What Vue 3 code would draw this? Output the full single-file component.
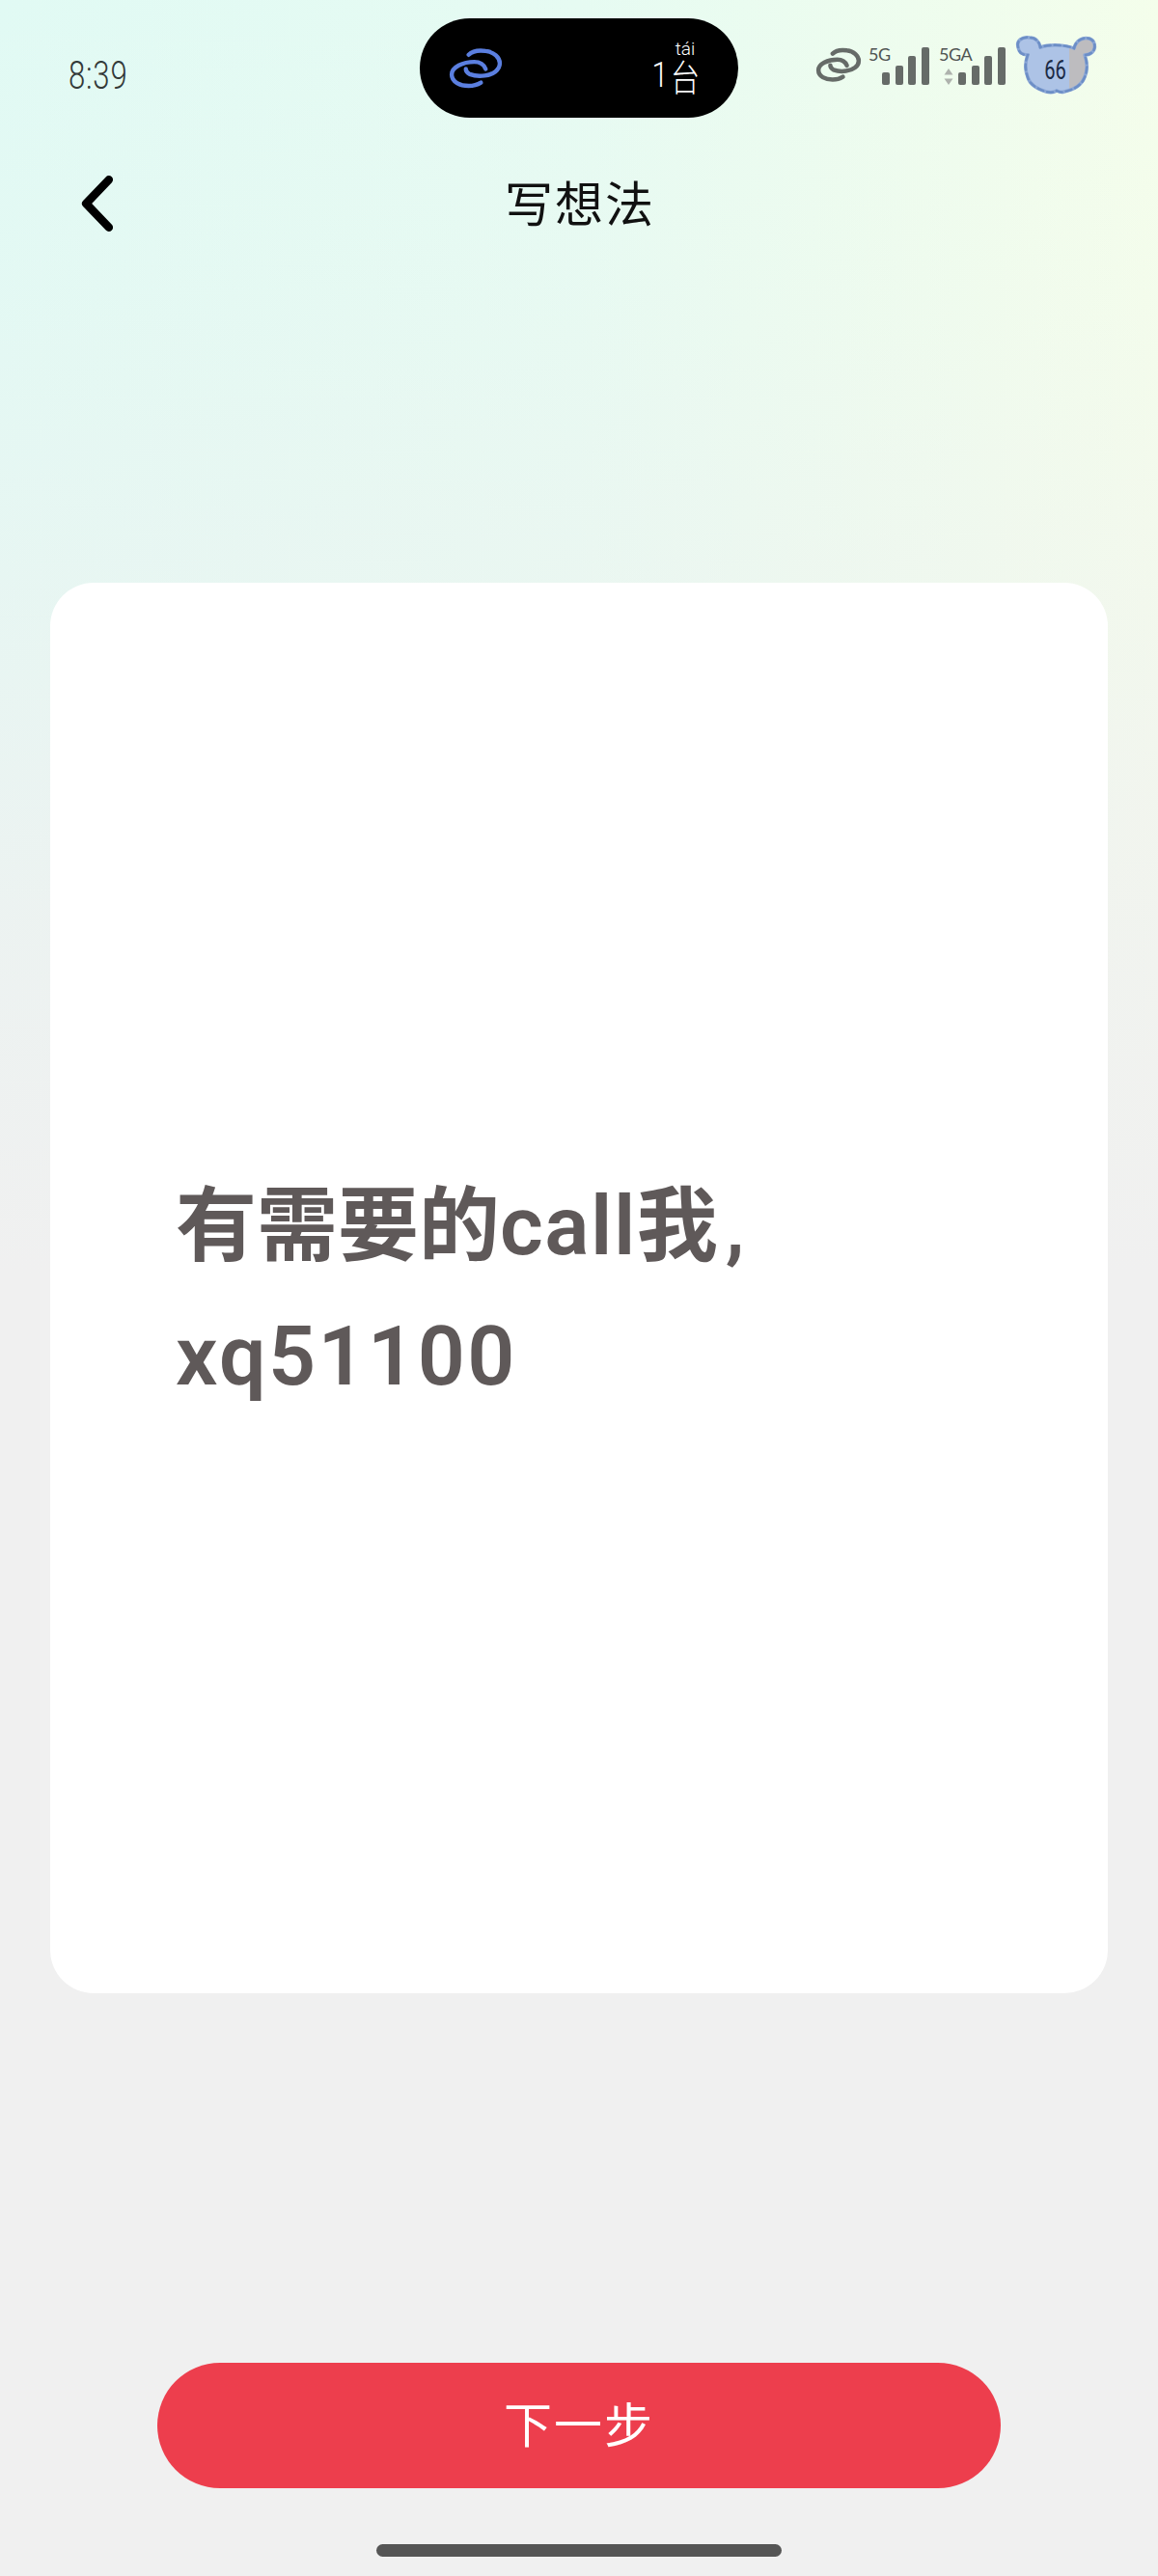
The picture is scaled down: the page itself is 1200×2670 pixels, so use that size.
<script setup>
const bars = [
  { x: 0, h: 13 },
  { x: 14, h: 20 },
  { x: 27, h: 30 },
  { x: 41, h: 39 }
]
const koalaPath =
  'M10 19 C8 12 14 8 22 9 C28 9 32 13 33 19 C42 16 58 16 68 20 C70 12 77 8 84 10 C90 12 91 20 87 24 C85 26 81 27 79 27 C82 35 82 43 79 50 C76 58 68 63 58 65 C55 66 52 65 50 64 C47 66 43 66 39 65 C29 62 22 57 20 50 C17 42 17 35 20 27 C14 27 11 25 10 19 Z'
</script>

<template>
  <div class="page">
    <header class="status">
      <div class="status-left"><span class="time">8:39</span></div>
      <div class="island">
        <svg class="island-link" viewBox="9 8 57 44" fill="none" stroke="#5b7fe0" stroke-width="4.500" stroke-linecap="round">
          <path d="M30 16 C34 12 41 11 48 12 C57 13 63 19 63 25 C63 32 56 37 47 38 C41 39 35 38 31 36.500 C28.500 35 27 33 27 31" />
          <path d="M48 31 C46 26 42 23.500 36 23.500 C24 23.500 12 29 12 37 C12 45 21 49 30 49 C35 49 39 48 43 45.500" />
        </svg>
        <div class="island-count">
          <span class="count-num">1</span>
          <div class="count-unit">
            <span class="pinyin">tái</span>
            <span class="hanzi">台</span>
          </div>
        </div>
      </div>
      <div class="status-right">
        <svg class="link-grey" viewBox="9 8 57 44" fill="none" stroke="#666b68" stroke-width="5.500" stroke-linecap="round">
          <path d="M30 16 C34 12 41 11 48 12 C57 13 63 19 63 25 C63 32 56 37 47 38 C41 39 35 38 31 36.500 C28.500 35 27 33 27 31" />
          <path d="M48 31 C46 26 42 23.500 36 23.500 C24 23.500 12 29 12 37 C12 45 21 49 30 49 C35 49 39 48 43 45.500" />
        </svg>
        <div class="net net-5g">
          <span class="net-label">5G</span>
          <svg class="signal" viewBox="0 0 49 39" fill="#666b68">
            <rect v-for="b in bars" :key="b.x" :x="b.x" :y="39 - b.h" width="8" :height="b.h" rx="2" />
          </svg>
        </div>
        <div class="net net-5ga">
          <span class="net-label">5GA</span>
          <svg class="arrows" viewBox="0 0 10 17" fill="#aeb2ad">
            <path d="M5 0 L9.500 6.500 H0.500 Z" />
            <path d="M5 17 L9.500 10.500 H0.500 Z" />
          </svg>
          <svg class="signal" viewBox="0 0 49 39" fill="#666b68">
            <rect v-for="b in bars" :key="b.x" :x="b.x" :y="39 - b.h" width="8" :height="b.h" rx="2" />
          </svg>
        </div>
        <div class="koala">
          <svg viewBox="0 0 100 75">
            <defs>
              <clipPath id="koala-level"><rect x="0" y="0" width="63" height="75" /></clipPath>
              <clipPath id="koala-rest"><rect x="63" y="0" width="37" height="75" /></clipPath>
            </defs>
            <path fill="#bdbcbf" clip-path="url(#koala-rest)" :d="koalaPath" />
            <path fill="#adc3e6" clip-path="url(#koala-level)" :d="koalaPath" />
            <path fill="none" stroke="#8ba7d6" stroke-width="3.500" stroke-linejoin="round" :d="koalaPath" />
            <path fill="none" stroke="#6c8ec6" stroke-width="2.500" stroke-linecap="round" stroke-dasharray="6 4" :d="koalaPath" />
          </svg>
          <span class="koala-num">66</span>
        </div>
      </div>
    </header>

    <nav class="nav">
      <button class="back" type="button" aria-label="返回">
        <svg viewBox="0 0 32 56" fill="none" stroke="#000" stroke-width="8" stroke-linecap="round" stroke-linejoin="round">
          <path d="M27 5 L5 28 L27 51" />
        </svg>
      </button>
      <h1 class="title">写想法</h1>
    </nav>

    <main class="card">
      <div class="idea">
        <p class="idea-line">有需要的<span class="latin">call</span>我<span class="comma">,</span></p>
        <p class="idea-line handle-line"><span class="latin handle">xq51100</span></p>
      </div>
    </main>

    <footer class="footer">
      <button class="next" type="button">下一步</button>
      <div class="home-bar"></div>
    </footer>
  </div>
</template>

<style scoped>
.page {
  height: 2670px;
  display: flex;
  flex-direction: column;
  overflow: hidden;
  background:
    linear-gradient(to bottom, rgba(240, 240, 240, 0) 0, rgba(240, 240, 240, 0.14) 300px, rgba(240, 240, 240, 0.42) 620px, rgba(240, 240, 240, 0.75) 950px, #f0f0f0 1320px),
    linear-gradient(to right, #e1faf4 0%, #e6fbf2 50%, #f4feeb 100%);
  font-family: "Noto Sans CJK SC", "Noto Sans", sans-serif;
}
.status {
  flex: none;
  display: grid;
  grid-template-columns: 1fr 330px 1fr;
  height: 103px;
  margin-top: 19px;
}
.status-left {
  padding: 39px 0 0 71px;
}
.time {
  display: inline-block;
  font-family: "Roboto", sans-serif;
  font-size: 41px;
  line-height: 41px;
  font-weight: 300;
  letter-spacing: 1px;
  color: #333938;
  transform: scaleX(0.76);
  transform-origin: left center;
}
.island {
  display: flex;
  align-items: center;
  justify-content: space-between;
  padding: 0 41px 0 30px;
  background: #000;
  border-radius: 52px;
}
.island-link {
  width: 56px;
  height: 43px;
  margin-top: -1px;
}
.island-count {
  display: flex;
  align-items: flex-end;
  gap: 2px;
  color: #fff;
  margin-top: -3px;
}
.count-num {
  font-family: "Roboto", sans-serif;
  font-size: 36px;
  line-height: 38px;
  font-weight: 300;
  transform: scaleX(0.85);
}
.count-unit {
  display: flex;
  flex-direction: column;
  align-items: center;
  width: 28px;
}
.pinyin {
  font-family: "Roboto", sans-serif;
  font-size: 19px;
  line-height: 17px;
  font-weight: 300;
}
.hanzi {
  font-size: 38px;
  line-height: 38px;
  font-weight: 300;
  transform: scaleX(0.8);
}
.status-right {
  display: flex;
  align-items: flex-start;
  padding: 20px 0 0 80px;
}
.link-grey {
  flex: none;
  width: 48px;
  height: 36px;
  margin-top: 10px;
}
.net {
  flex: none;
  position: relative;
  height: 39px;
  margin-top: 10px;
}
.net-5g {
  width: 63px;
  margin-left: 7px;
}
.net-5ga {
  width: 69px;
  margin-left: 10px;
}
.net-label {
  position: absolute;
  left: 0;
  top: -2px;
  font-family: "Lato", "Liberation Sans", sans-serif;
  font-size: 18px;
  line-height: 18px;
  color: #4f5452;
  letter-spacing: -0.5px;
  white-space: nowrap;
}
.signal {
  position: absolute;
  right: 0;
  bottom: 0;
  width: 49px;
  height: 39px;
}
.arrows {
  position: absolute;
  left: 5px;
  bottom: 0;
  width: 10px;
  height: 17px;
}
.koala {
  flex: none;
  position: relative;
  width: 100px;
  height: 75px;
  margin: -9px 0 0 3px;
}
.koala svg {
  display: block;
  width: 100px;
  height: 75px;
}
.koala-num {
  position: absolute;
  left: 33px;
  top: 28px;
  width: 30px;
  font-family: "Roboto", sans-serif;
  font-size: 28px;
  line-height: 30px;
  text-align: center;
  color: #1b2a45;
  transform: scaleX(0.72);
}
.nav {
  flex: none;
  display: grid;
  grid-template-columns: 1fr auto 1fr;
  align-items: center;
  height: 70px;
  margin-top: 53px;
  padding-left: 83px;
}
.back {
  grid-column: 1;
  justify-self: start;
  width: 36px;
  height: 60px;
  padding: 0;
  margin-top: 2px;
  border: 0;
  background: none;
}
.back svg {
  display: block;
  width: 36px;
  height: 60px;
}
.title {
  grid-column: 2;
  margin: -4px 0 0 -81px;
  font-size: 50px;
  line-height: 70px;
  font-weight: 400;
  letter-spacing: 2px;
  color: #111;
}
.card {
  flex: none;
  box-sizing: border-box;
  height: 1462px;
  margin: 359px 52px 0;
  padding: 0 60px 0 130px;
  display: flex;
  flex-direction: column;
  justify-content: center;
  background: #fff;
  border-radius: 45px;
}
.idea {
  margin-top: -5px;
  font-family: "Noto Sans CJK SC", sans-serif;
  font-size: 84px;
  font-weight: 600;
  color: #5f5959;
}
.idea-line {
  margin: 0;
  line-height: 139px;
}
.handle-line {
  line-height: 130px;
  font-family: "Roboto", sans-serif;
}
.latin {
  font-family: "Roboto", sans-serif;
  font-size: 86px;
  letter-spacing: 1.5px;
}
.comma {
  font-family: "Roboto", sans-serif;
  margin-left: 8px;
}
.handle {
  letter-spacing: 2.4px;
}
.footer {
  flex: none;
  display: flex;
  flex-direction: column;
  align-items: center;
  padding-top: 383px;
}
.next {
  width: 874px;
  height: 130px;
  padding: 0 0 8px;
  border: 0;
  border-radius: 65px;
  background: #ed3e4d;
  color: #fff;
  font-family: "Noto Sans CJK SC", sans-serif;
  font-size: 50px;
  font-weight: 400;
  letter-spacing: 2px;
}
.home-bar {
  width: 420px;
  height: 13px;
  margin-top: 58px;
  border-radius: 7px;
  background: #555;
}
</style>
